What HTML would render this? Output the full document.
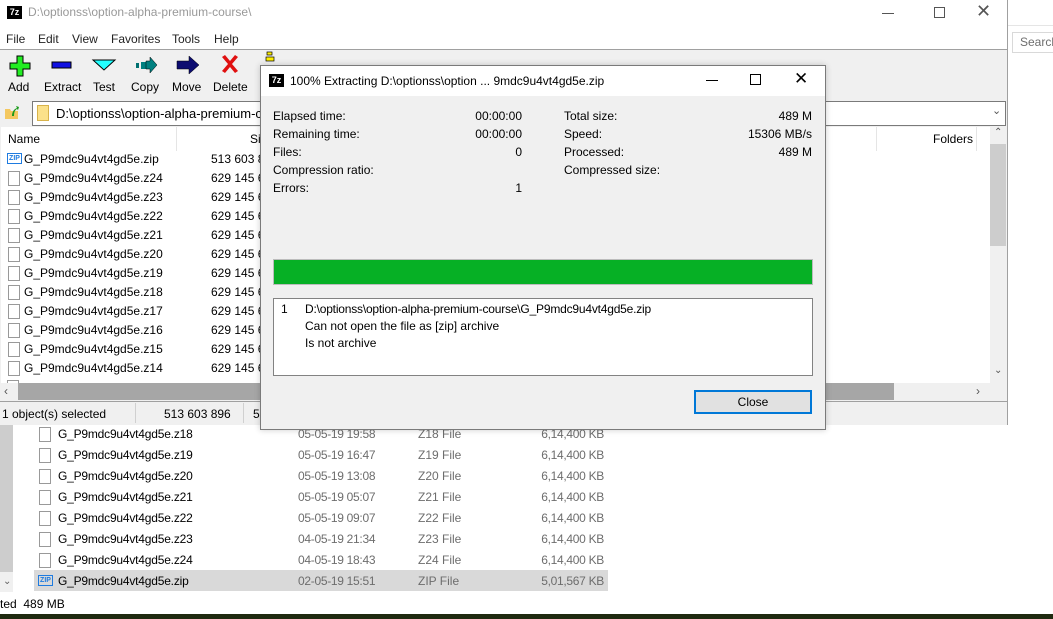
<!DOCTYPE html>
<html><head><meta charset="utf-8"><style>
*{margin:0;padding:0;box-sizing:border-box}
body{width:1053px;height:619px;position:relative;overflow:hidden;background:#fff;font-family:"Liberation Sans",sans-serif;font-size:12px;color:#000}
.a{position:absolute;white-space:nowrap}
.g{color:#6d6d6d}
.r{text-align:right}
</style></head><body>
<div class="a" style="left:1008px;top:0;width:45px;height:26px;background:#fff;border-bottom:1px solid #e5e5e5"></div>
<div class="a" style="left:1012px;top:32px;width:45px;height:21px;border:1px solid #d9d9d9"></div>
<div class="a g" style="left:1020px;top:35px;font-size:12px">Search</div>
<div class="a" style="left:1007px;top:0;width:1px;height:425px;background:#a0a0a0"></div>

<div class="a" style="left:0;top:424px;width:13px;height:168px;background:#cdcdcd"></div>
<div class="a" style="left:0;top:572px;width:13px;height:20px;background:#f0f0f0"></div>
<div class="a" style="left:3px;top:576px;font-size:10px;color:#606060">⌄</div>
<div class="a" style="left:34px;top:570px;width:574px;height:21px;background:#d9d9d9"></div>
<div id="bl"></div>
<div class="a" style="left:0;top:597px;font-size:12px">ted&nbsp; 489 MB</div>
<div class="a" style="left:0;top:614px;width:1053px;height:5px;background:#1f2a10"></div>

<div class="a" style="left:0;top:0;width:1007px;height:425px;background:#f0f0f0"></div>
<div class="a" style="left:0;top:0;width:1007px;height:49px;background:#fff"></div>
<div class="a" style="left:0;top:49px;width:1007px;height:1px;background:#a0a0a0"></div>
<div class="a" style="left:7px;top:6px;width:15px;height:13px;border:1px solid #000;background:#000;color:#fff;font-size:9px;font-weight:bold;line-height:11px;text-align:center">7z</div>
<div class="a" style="left:28px;top:5px;font-size:12px;color:#999">D:\optionss\option-alpha-premium-course\</div>
<div class="a" style="left:882px;top:13px;width:12px;height:1px;background:#555"></div>
<div class="a" style="left:934px;top:7px;width:11px;height:11px;border:1px solid #555"></div>
<div class="a" style="left:976px;top:1px;font-size:18px;color:#555">✕</div>
<div class="a" style="left:6px;top:32px;color:#222">File</div>
<div class="a" style="left:38px;top:32px;color:#222">Edit</div>
<div class="a" style="left:72px;top:32px;color:#222">View</div>
<div class="a" style="left:111px;top:32px;color:#222">Favorites</div>
<div class="a" style="left:172px;top:32px;color:#222">Tools</div>
<div class="a" style="left:214px;top:32px;color:#222">Help</div>

<svg class="a" style="left:0;top:50px" width="290" height="30">
<path d="M17 6h6v7h7v6h-7v7h-6v-7h-7v-6h7z" fill="#22ee22" stroke="#000" stroke-width="1"/>
<rect x="52" y="12" width="19" height="6" fill="#1010e0" stroke="#000"/>
<path d="M93 10h22l-11 10z" fill="#22ffff" stroke="#000" stroke-width="1"/>
<rect x="136" y="13" width="3" height="5" fill="#007070"/><rect x="141" y="12" width="5" height="7" fill="#008080"/>
<path d="M146 11h4v-4l7 8l-7 8v-4h-4z" fill="#008080" stroke="#000" stroke-width=".5"/>
<path d="M177 11h12v-5l10 9l-10 9v-5h-12z" fill="#0c0c70" stroke="#000" stroke-width=".5"/>
<path d="M222 7l3-2 5 6 5-6 3 2-6 7 6 7-3 2-5-6-5 6-3-2 6-7z" fill="#e01010"/>
<rect x="267" y="2" width="5" height="3" fill="#ffef00" stroke="#000" stroke-width=".7"/>
<rect x="266" y="7" width="8" height="4" fill="#ffef00" stroke="#000" stroke-width=".7"/>
</svg>
<div class="a" style="left:8px;top:80px">Add</div>
<div class="a" style="left:44px;top:80px">Extract</div>
<div class="a" style="left:93px;top:80px">Test</div>
<div class="a" style="left:131px;top:80px">Copy</div>
<div class="a" style="left:172px;top:80px">Move</div>
<div class="a" style="left:213px;top:80px">Delete</div>

<svg class="a" style="left:4px;top:104px" width="16" height="16"><path d="M1 5h5l1 2h7v8H1z" fill="#f4c860"/><path d="M8 12c0-4 2-7 5-8l-1-2 3 1-1 3-1-1c-2 1-3 3-3 7z" fill="#1a9a1a"/></svg>
<div class="a" style="left:32px;top:101px;width:974px;height:25px;background:#fff;border:1px solid #7a7a7a"></div>
<div class="a" style="left:37px;top:105px;width:12px;height:16px;background:#fbe18a;border:1px solid #d8b34b"></div>
<div class="a" style="left:56px;top:106px;font-size:13px">D:\optionss\option-alpha-premium-course\</div>
<div class="a" style="left:992px;top:104px;color:#555;font-size:11px">⌄</div>

<div class="a" style="left:1px;top:127px;width:989px;height:256px;background:#fff"></div>
<div class="a" style="left:8px;top:132px">Name</div>
<div class="a" style="left:176px;top:127px;width:1px;height:24px;background:#e5e5e5"></div>
<div class="a" style="left:250px;top:132px">Size</div>
<div class="a" style="left:812px;top:132px">nt</div>
<div class="a" style="left:876px;top:127px;width:1px;height:24px;background:#e5e5e5"></div>
<div class="a" style="left:933px;top:132px">Folders</div>
<div class="a" style="left:976px;top:127px;width:1px;height:24px;background:#e5e5e5"></div>
<div class="a" style="left:990px;top:127px;width:16px;height:256px;background:#f0f0f0"></div>
<div class="a" style="left:990px;top:144px;width:16px;height:102px;background:#cdcdcd"></div>
<div class="a" style="left:994px;top:127px;font-size:10px;color:#555">⌃</div>
<div class="a" style="left:994px;top:365px;font-size:10px;color:#555">⌄</div>
<div id="tl"></div>
<div class="a" style="left:1px;top:383px;width:989px;height:17px;background:#f0f0f0"></div>
<div class="a" style="left:18px;top:383px;width:876px;height:17px;background:#a6a6a6"></div>
<div class="a" style="left:4px;top:384px;color:#555">‹</div>
<div class="a" style="left:976px;top:384px;color:#555">›</div>
<div class="a" style="left:0;top:401px;width:1008px;height:1px;background:#a0a0a0"></div>
<div class="a" style="left:2px;top:407px">1 object(s) selected</div>
<div class="a" style="left:135px;top:403px;width:1px;height:20px;background:#d0d0d0"></div>
<div class="a" style="left:164px;top:407px">513 603 896</div>
<div class="a" style="left:243px;top:403px;width:1px;height:20px;background:#d0d0d0"></div>
<div class="a" style="left:253px;top:407px">5</div>

<div class="a" style="left:260px;top:65px;width:566px;height:365px;background:#f0f0f0;border:1px solid #7a7a7a;box-shadow:0 0 6px rgba(0,0,0,.2)"></div>
<div class="a" style="left:261px;top:66px;width:564px;height:30px;background:#fff"></div>
<div class="a" style="left:269px;top:74px;width:15px;height:13px;background:#000;color:#fff;font-size:9px;font-weight:bold;line-height:13px;text-align:center">7z</div>
<div class="a" style="left:290px;top:74px">100% Extracting D:\optionss\option ... 9mdc9u4vt4gd5e.zip</div>
<div class="a" style="left:706px;top:80px;width:12px;height:1px;background:#000"></div>
<div class="a" style="left:750px;top:74px;width:11px;height:11px;border:1px solid #000"></div>
<div class="a" style="left:794px;top:69px;font-size:17px">✕</div>
<div class="a" style="left:273px;top:109px">Elapsed time:</div><div class="a r" style="left:420px;width:102px;top:109px">00:00:00</div>
<div class="a" style="left:273px;top:127px">Remaining time:</div><div class="a r" style="left:420px;width:102px;top:127px">00:00:00</div>
<div class="a" style="left:273px;top:145px">Files:</div><div class="a r" style="left:420px;width:102px;top:145px">0</div>
<div class="a" style="left:273px;top:163px">Compression ratio:</div>
<div class="a" style="left:273px;top:181px">Errors:</div><div class="a r" style="left:420px;width:102px;top:181px">1</div>
<div class="a" style="left:564px;top:109px">Total size:</div><div class="a r" style="left:700px;width:112px;top:109px">489 M</div>
<div class="a" style="left:564px;top:127px">Speed:</div><div class="a r" style="left:700px;width:112px;top:127px">15306 MB/s</div>
<div class="a" style="left:564px;top:145px">Processed:</div><div class="a r" style="left:700px;width:112px;top:145px">489 M</div>
<div class="a" style="left:564px;top:163px">Compressed size:</div>
<div class="a" style="left:273px;top:259px;width:540px;height:26px;background:#06b025;border:1px solid #bcbcbc"></div>
<div class="a" style="left:273px;top:298px;width:540px;height:78px;background:#fff;border:1px solid #828282"></div>
<div class="a" style="left:281px;top:302px">1</div>
<div class="a" style="left:305px;top:302px;letter-spacing:-0.2px">D:\optionss\option-alpha-premium-course\G_P9mdc9u4vt4gd5e.zip</div>
<div class="a" style="left:305px;top:319px">Can not open the file as [zip] archive</div>
<div class="a" style="left:305px;top:336px">Is not archive</div>
<div class="a" style="left:694px;top:390px;width:118px;height:24px;background:#e1e1e1;border:2px solid #0078d7;text-align:center;line-height:20px">Close</div>

<script>
var t='',n=['zip','z24','z23','z22','z21','z20','z19','z18','z17','z16','z15','z14'];
function ic(x,y,z){return z?'<div class="a" style="left:'+x+'px;top:'+(y+1)+'px;width:15px;height:11px;border:1px solid #1e7be0;color:#1e7be0;font-size:7px;line-height:9px;text-align:center;font-weight:bold">ZIP</div>':'<div class="a" style="left:'+(x+1)+'px;top:'+y+'px;width:12px;height:15px;border:1px solid #999;background:#fff"></div>';}
for(var i=0;i<12;i++){var y=152+i*19;t+=ic(7,y,i==0)+'<div class="a" style="left:24px;top:'+y+'px">G_P9mdc9u4vt4gd5e.'+n[i]+'</div><div class="a" style="left:211px;top:'+y+'px">'+(i==0?'513 603 89':'629 145 60')+'</div>';}
t+='<div class="a" style="left:7px;top:380px;width:12px;height:3px;border:1px solid #999;border-bottom:none"></div>';
document.getElementById('tl').outerHTML=t;
var b='',r=[['z18','05-05-19 19:58','Z18 File','6,14,400 KB'],['z19','05-05-19 16:47','Z19 File','6,14,400 KB'],['z20','05-05-19 13:08','Z20 File','6,14,400 KB'],['z21','05-05-19 05:07','Z21 File','6,14,400 KB'],['z22','05-05-19 09:07','Z22 File','6,14,400 KB'],['z23','04-05-19 21:34','Z23 File','6,14,400 KB'],['z24','04-05-19 18:43','Z24 File','6,14,400 KB'],['zip','02-05-19 15:51','ZIP File','5,01,567 KB']];
for(var i=0;i<8;i++){var y=427+i*21;b+=ic(38,y,i==7)+'<div class="a" style="left:58px;top:'+y+'px;letter-spacing:-0.2px">G_P9mdc9u4vt4gd5e.'+r[i][0]+'</div><div class="a g" style="left:298px;top:'+y+'px;letter-spacing:-0.3px">'+r[i][1]+'</div><div class="a g" style="left:418px;top:'+y+'px">'+r[i][2]+'</div><div class="a g r" style="left:504px;width:100px;top:'+y+'px;letter-spacing:-0.3px">'+r[i][3]+'</div>';}
document.getElementById('bl').outerHTML=b;
</script>
</body></html>
